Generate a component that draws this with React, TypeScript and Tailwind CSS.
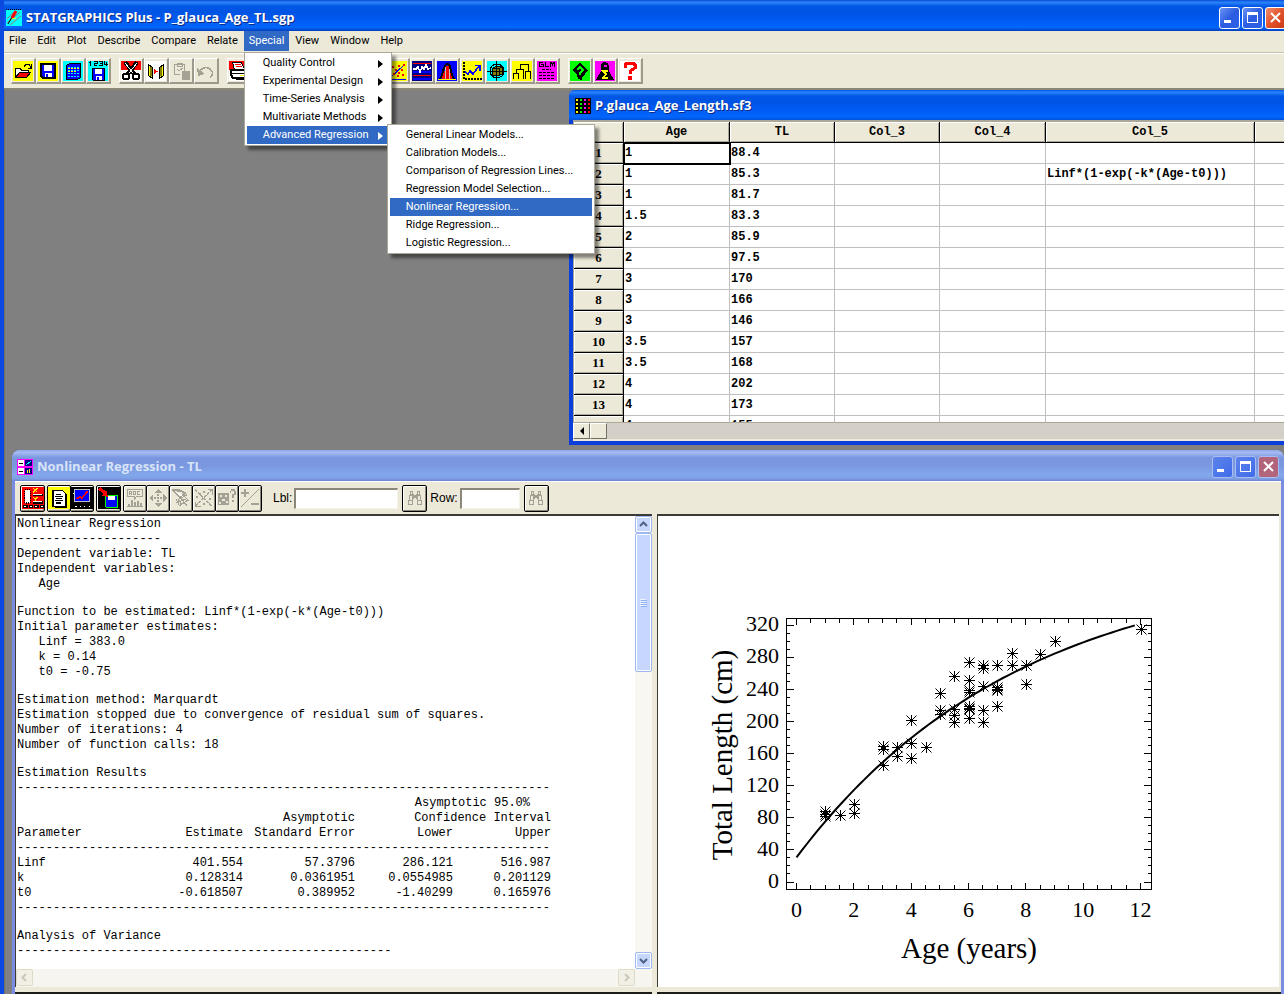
import { ReactNode } from 'react';
import clsx from 'clsx';

const MENUS = ['File', 'Edit', 'Plot', 'Describe', 'Compare', 'Relate', 'Special', 'View', 'Window', 'Help'];

const SPECIAL_ITEMS = [
  'Quality Control',
  'Experimental Design',
  'Time-Series Analysis',
  'Multivariate Methods',
  'Advanced Regression',
];

const REGRESSION_ITEMS = [
  'General Linear Models...',
  'Calibration Models...',
  'Comparison of Regression Lines...',
  'Regression Model Selection...',
  'Nonlinear Regression...',
  'Ridge Regression...',
  'Logistic Regression...',
];

const SHEET_ROWS: Array<[string, string]> = [
  ['1', '88.4'],
  ['1', '85.3'],
  ['1', '81.7'],
  ['1.5', '83.3'],
  ['2', '85.9'],
  ['2', '97.5'],
  ['3', '170'],
  ['3', '166'],
  ['3', '146'],
  ['3.5', '157'],
  ['3.5', '168'],
  ['4', '202'],
  ['4', '173'],
  ['4', '155'],
];

const ESTIMATES = [
  ['Linf', '401.554', '57.3796', '286.121', '516.987'],
  ['k', '0.128314', '0.0361951', '0.0554985', '0.201129'],
  ['t0', '-0.618507', '0.389952', '-1.40299', '0.165976'],
];

// age -> observed lengths
const POINTS: Array<[number, number[]]> = [
  [1, [88.4, 85.3, 81.7]],
  [1.5, [83.3]],
  [2, [85.9, 97.5]],
  [3, [170, 166, 146]],
  [3.5, [157, 168]],
  [4, [202, 173, 155]],
  [4.5, [168]],
  [5, [236, 215, 210]],
  [5.5, [257, 216, 208, 200]],
  [6, [274, 252, 240, 237, 220, 217, 216, 204]],
  [6.5, [270, 267, 244, 215, 200]],
  [7, [270, 243, 241, 240, 219]],
  [7.5, [285, 270]],
  [8, [270, 247]],
  [8.5, [284]],
  [9, [301]],
  [12, [315]],
];

function Icon({ children, size = 20 }: { children: ReactNode; size?: number }) {
  return (
    <svg width={size} height={size} viewBox="0 0 20 20" shapeRendering="crispEdges" fill="none" aria-hidden="true" className="shrink-0">
      {children}
    </svg>
  );
}

const ICONS: Record<string, ReactNode> = {
  open: (
    <Icon>
      <path fill="#ff0" d="M0 0h20v20H0z" />
      <path fill="#fff" stroke="#000" d="M2.500 16.500v-9h5l1 2h7v3" />
      <path fill="#f00" stroke="#000" d="M2.500 16.500l4-5h11l-4 5z" />
      <path stroke="#000" d="M11 5.500l2-2h3l2 3M18.500 3v4h-4" />
    </Icon>
  ),
  save: (
    <Icon>
      <path fill="#ff0" d="M0 0h20v20H0z" />
      <path fill="#00f" stroke="#000" strokeWidth="2" d="M3 3h14v14H5l-2-2z" />
      <path fill="#fff" d="M6 4h8v6H6z" />
      <path fill="#fff" d="M7 12h7v4H7z" />
      <path fill="#00f" d="M8 13h2v3H8z" />
    </Icon>
  ),
  sheet: (
    <Icon>
      <path fill="#0ff" d="M0 0h20v20H0z" />
      <path fill="#00f" stroke="#000" d="M3.500 4.500l3-2h11v14l-3 2h-11z" />
      <path stroke="#0ff" strokeDasharray="2 1" d="M5 6.500h11M5 9.500h11M5 12.500h11M5 15.500h11" />
      <path stroke="#ff0" strokeDasharray="2 1" d="M5 7.500h11M5 10.500h8" />
    </Icon>
  ),
  saveData: (
    <Icon>
      <path fill="#0ff" d="M0 0h20v20H0z" />
      <path stroke="#000" d="M2.500 0v5M1 1.500h1M6 .5h3v2H6.500v2H9M11 .5h3v4h-3M12 2.500h2M16.500 0v3h3M18.500 1v4" />
      <path fill="#00f" stroke="#000" d="M4.500 7.500h12v12h-11l-1-1z" />
      <path fill="#fff" d="M7 8h7v5H7zM8 15h6v4H8z" />
      <path fill="#00f" d="M9 16h2v3H9z" />
    </Icon>
  ),
  cut: (
    <Icon>
      <path fill="#f00" d="M0 0h20v9H0z" />
      <path fill="#fff" d="M0 9h20v11H0z" />
      <path stroke="#000" strokeWidth="4" d="M4 1l10 13M16 1L6 14" />
      <path stroke="#fff" d="M4 2l8 10M16 2L8 12" />
      <circle cx="5" cy="15.500" r="3" stroke="#000" strokeWidth="2" fill="#fff" />
      <circle cx="15" cy="15.500" r="3" stroke="#000" strokeWidth="2" fill="#fff" />
    </Icon>
  ),
  copy: (
    <Icon>
      <path fill="#fff" d="M0 0h20v20H0z" />
      <path fill="#ff0" stroke="#000" d="M2.500 3.500l4 3v11l-4-3zM17.500 3.500l-4 3v11l4-3z" />
      <path fill="#808000" d="M4 6h2v9H4zM14 6h2v9h-2z" />
      <path fill="#f00" d="M8 8l4 2.500L8 13z" />
    </Icon>
  ),
  paste: (
    <Icon>
      <path stroke="#a5a295" d="M3.500 3.500h10v7M3.500 3v10h5M6 2.500h5v3H6zM6 8l2 2 4-3" />
      <path fill="#a5a295" d="M11 10h8v9h-8z" />
    </Icon>
  ),
  undo: (
    <Icon>
      <path stroke="#a5a295" strokeWidth="1.500" d="M3 12c2-5 7-7 11-4s3 6 0 8" />
      <path fill="#a5a295" d="M1 7l1 8 7-2z" />
    </Icon>
  ),
  print: (
    <Icon>
      <path fill="#f00" d="M0 0h20v9H0z" />
      <path fill="#fff" d="M0 9h20v11H0z" />
      <path fill="#fff" stroke="#000" d="M5.500 8.500l-2-7h9l3 7z" />
      <path stroke="#f00" d="M6 3.500h6M7 5.500h6" />
      <path fill="#fff" stroke="#000" strokeWidth="2" d="M2 9h15l2 3v5H4l-2-3z" />
      <path stroke="#000" d="M3 12.500h14M7 18.500h9" />
      <path fill="#ff0" d="M11 14h4v1h-4z" />
    </Icon>
  ),
  scatter: (
    <Icon>
      <path fill="#ff0" d="M0 0h20v20H0z" />
      <path stroke="#00f" d="M2.500 1v17h16M3 17L18 3" />
      <path fill="#f00" d="M5 5h2v2H5zM8 8h2v2H8zM11 4h2v2h-2zM14 8h2v2h-2zM6 12h2v2H6zM11 11h2v2h-2zM15 13h2v2h-2zM16 3h2v2h-2zM10 14h2v2h-2z" />
    </Icon>
  ),
  control: (
    <Icon>
      <path fill="#000080" d="M0 0h20v20H0z" />
      <path stroke="#f00" d="M1 2.500h18M1 14.500h18" />
      <path stroke="#00f" strokeWidth="2" d="M1 11h18M1 18h18" />
      <path stroke="#fff" strokeWidth="1.500" d="M1 8h3l2-2 2 5 2-5 2 2 2-4 2 4 3-1" />
    </Icon>
  ),
  histogram: (
    <Icon>
      <path fill="#00f" d="M0 0h20v20H0z" />
      <path fill="#f00" d="M8 5h4v13H8zM5 10h3v8H5zM12 10h3v8h-3z" />
      <path stroke="#c0c0c0" d="M8.500 6v12M12.500 6v12" />
      <path stroke="#000" strokeWidth="2" d="M2 18c5-1 3-14 8-15s3 14 8 15" />
      <path stroke="#ff0" d="M1 18.500h18" />
    </Icon>
  ),
  trend: (
    <Icon>
      <path fill="#ff0" d="M0 0h20v20H0z" />
      <path stroke="#000" strokeDasharray="2 1" strokeWidth="2" d="M2 1v17h18" />
      <path stroke="#00f" strokeWidth="1.500" d="M3 11l3 2 2-3 3 3 6-8M13 4.500h5v5" />
    </Icon>
  ),
  cube: (
    <Icon>
      <path fill="#0ff" d="M0 0h20v20H0z" />
      <circle cx="10" cy="10" r="7" stroke="#000" />
      <path fill="#808000" stroke="#000" d="M5.500 7.500l3-2h7v7l-3 2h-7z" />
      <path stroke="#000" d="M5.500 7.500h7v7M12.500 7.500l3-2M9.500 0v20M0 10.500h20" />
    </Icon>
  ),
  tree: (
    <Icon>
      <path fill="#ff0" d="M0 0h20v20H0z" />
      <path stroke="#000" d="M1.500 18v-6h5v6M4.500 12V8.500h7V18M8.500 8v-5h8v7M13.500 18v-8h5v8" />
    </Icon>
  ),
  glm: (
    <Icon>
      <path fill="#f0f" d="M0 0h20v20H0z" />
      <path stroke="#000" d="M6 1.500H2.500v4H6v-2H4M8.500 1v4.500H12M13.500 6V1.500h1l1 2 1-2h1V6" />
      <path stroke="#000" strokeDasharray="3 1" d="M5 8.500h9M2 11.500h15M2 14.500h15M2 17.500h15" />
    </Icon>
  ),
  advisor: (
    <Icon>
      <path fill="#0f0" d="M0 0h20v20H0z" />
      <path fill="#000" d="M2 9l8-7 8 7-6 8v2l-4-1-1-4z" />
      <path stroke="#0f0" strokeWidth="1.500" d="M7 9l3-3 3 3-3 3v2" />
    </Icon>
  ),
  wizard: (
    <Icon>
      <path fill="#f0f" d="M0 0h20v20H0z" />
      <path fill="#000" d="M1 19l5-9V3l3-2 4 1 1 4v4l5 9z" />
      <path fill="#f0f" d="M9 4h3v2H9z" />
      <path stroke="#ff0" strokeWidth="1.500" d="M13 10H8l3 3-3 4h5" />
    </Icon>
  ),
  question: (
    <Icon>
      <path fill="#fff" d="M0 0h20v20H0z" />
      <path stroke="#f00" strokeWidth="3" d="M5 7V4l2-2h6l2 2v3l-5 3v3" />
      <path fill="#f00" d="M8 15h4v4H8z" />
    </Icon>
  ),
  blank: (
    <Icon>
      <path fill="#ff0" d="M0 0h20v20H0z" />
    </Icon>
  ),
  input: (
    <Icon size={22}>
      <path fill="#f00" d="M0 0h20v20H0z" />
      <path fill="#fff" stroke="#000" strokeDasharray="1 1" d="M2.500 2.500h5v12h-5z" />
      <path stroke="#ff0" d="M10 1l4 4M14 1l-4 4M10 9l2 2 2-2M12 11v2" />
      <path stroke="#000" strokeWidth="2" d="M10 7h9M10 14h9" />
      <path stroke="#fff" d="M10 6.500h8M10 13.500h8" />
      <path fill="#fff" stroke="#000" d="M1.500 16.500h3v2h-3zM6.500 16.500h3v2h-3zM11.500 16.500h3v2h-3zM16.500 16.500h3v2h-3z" />
    </Icon>
  ),
  report: (
    <Icon size={22}>
      <path fill="#ff0" d="M0 0h20v20H0z" />
      <path fill="#fff" stroke="#000" d="M4.500 3.500h9l2 2v12h-11z" />
      <path stroke="#000" d="M7 6.500h5M6 8.500h8M7 10.500h6M6 12.500h8M7 14.500h5M16.500 6v12.500H6" />
    </Icon>
  ),
  graph: (
    <Icon size={22}>
      <path fill="#000" d="M0 0h20v20H0z" />
      <path fill="#00f" stroke="#c0c0c0" d="M3.500 2.500h13v11h-13z" />
      <path stroke="#f00" strokeWidth="1.500" d="M5 11l3-2 2 1 5-6" />
      <path stroke="#fff" strokeDasharray="1 3" d="M2 5.500h1M4 17.500h13" />
    </Icon>
  ),
  saveResults: (
    <Icon size={22}>
      <path fill="#000" d="M0 0h20v20H0z" />
      <path fill="#00f" stroke="#0f0" d="M6.500 7.500h11v11h-10l-1-1z" />
      <path fill="#fff" d="M9 8h6v4H9z" />
      <path stroke="#f00" strokeWidth="3" d="M1 1l6 5" />
      <path fill="#f00" d="M3 8l5-5 1 6z" />
    </Icon>
  ),
  label: (
    <Icon>
      <path stroke="#a5a295" d="M2.500 1.500h15v7h-6l-2 3v-3h-7z" />
      <path stroke="#a5a295" d="M4.500 7V3.500h2V7M4.500 5.500h2M8.500 3.500h2v3h-2zM15 3.500h-2.500v3H15M2 18.500h16" />
      <path stroke="#a5a295" strokeWidth="2" d="M4 16v2M7 12v6M10 14v4M13 13v5M16 15v3" />
    </Icon>
  ),
  move: (
    <Icon>
      <path fill="#a5a295" d="M10 1l4 4H6zM10 19l4-4H6zM1 10l4-4v8zM19 10l-4-4v8z" />
      <path fill="#a5a295" d="M9 6h2v2H9zM9 12h2v2H9zM6 9h2v2H6zM12 9h2v2h-2zM9 9h2v2H9z" />
    </Icon>
  ),
  brush: (
    <Icon>
      <path stroke="#a5a295" strokeWidth="1.500" d="M2 2l7 8 5-5-6-3zM2 2l10 2M9 10l7-3" />
      <path stroke="#a5a295" d="M7 11l4 6M10 10l6 8M13 8l5 5M5 15l10-4M8 18l9-6M5 11l3 6" />
      <path stroke="#fff" d="M6 4l6 5" />
    </Icon>
  ),
  exclude: (
    <Icon>
      <path stroke="#a5a295" strokeDasharray="3 1" d="M1 1.500l17 17M18 1.500l-17 17" />
      <path stroke="#a5a295" d="M14 1.500h4.500v5M1.500 14v4.500h5" />
      <path fill="#a5a295" d="M2 8h2v2H2zM9 3h2v2H9zM15 10h2v2h-2zM9 15h2v2H9zM5 5h2v2H5z" />
    </Icon>
  ),
  identify: (
    <Icon>
      <path fill="#a5a295" d="M1 5h11v12H1zM13 3h1V1h4v2h1v4h-2v3h-2V6h2V3h-3v2h-1zM15 12h2v2h-2z" />
      <path fill="#ece9d8" d="M3 7h2v2H3zM8 7h2v2H8zM5 11h3v2H5zM2 14h2v2H2zM9 13h2v2H9z" />
    </Icon>
  ),
  plusMinus: (
    <Icon>
      <path stroke="#a5a295" d="M1 19L19 1" />
      <path stroke="#a5a295" strokeWidth="2" d="M1 5h8M5 1v8M11 16h8" />
    </Icon>
  ),
  binoculars: (
    <Icon>
      <path stroke="#a5a295" d="M5.500 3.500h2v3h-2zM12.500 3.500h2v3h-2zM4.500 7.500h3v5h-3zM12.500 7.500h3v5h-3zM3.500 12.500h4v4h-4zM12.500 12.500h4v4h-4z" />
      <path fill="#a5a295" d="M8 6h1v5H8zM11 6h1v5h-1zM9 7h2v3H9z" />
    </Icon>
  ),
};

const TOOL_GROUPS = [
  ['open', 'save', 'sheet', 'saveData'],
  ['cut', 'copy', 'paste', 'undo'],
  ['print', 'blank', 'blank'],
  ['blank', 'blank', 'blank', 'scatter', 'control', 'histogram', 'trend', 'cube', 'tree', 'glm'],
  ['advisor', 'wizard', 'question'],
];

const PANE_TOOL_GROUPS = [
  ['input'],
  ['report', 'graph'],
  ['saveResults'],
  ['label', 'move', 'brush', 'exclude', 'identify', 'plusMinus'],
];

function ToolButton({ name }: { name: string }) {
  return (
    <button
      type="button"
      aria-label={name}
      className="flex h-[26px] w-[25px] items-center justify-center border border-r-2 border-b-2 border-t-white border-l-white border-r-[#9d9a8c] border-b-[#9d9a8c] bg-[#ece9d8]"
    >
      {ICONS[name]}
    </button>
  );
}

function PaneButton({ name, wide }: { name: string; wide?: boolean }) {
  return (
    <button
      type="button"
      aria-label={name}
      className={clsx(
        '-mr-px flex h-[27px] items-center justify-center rounded-[2px] border border-black bg-[#ece9d8] shadow-[inset_1px_1px_0_#fff,inset_-1px_-1px_0_#8a877a]',
        wide ? 'w-[25px]' : 'w-6'
      )}
    >
      {ICONS[name]}
    </button>
  );
}

function CaptionButtons({ inactive }: { inactive?: boolean }) {
  const base = clsx(
    'flex h-[22px] w-[21px] items-center justify-center rounded-[3px] border',
    inactive ? 'border-[#a9bdf3]' : 'border-white'
  );
  const blue = inactive
    ? 'bg-linear-to-br from-[#5d83ea] to-[#3f6bea]'
    : 'bg-linear-to-br from-[#6a94f5] via-[#2c5ce0] to-[#2a63ea]';
  return (
    <div className="flex gap-0.5">
      <button type="button" aria-label="Minimize" className={clsx(base, blue)}>
        <svg width="15" height="15" shapeRendering="crispEdges">
          <path fill="#fff" d="M2 10h7v3H2z" />
        </svg>
      </button>
      <button type="button" aria-label="Maximize" className={clsx(base, blue)}>
        <svg width="15" height="15" shapeRendering="crispEdges">
          <path fill="#fff" fillRule="evenodd" d="M2 2h11v11H2zM3 5v7h9V5z" />
        </svg>
      </button>
      <button
        type="button"
        aria-label="Close"
        className={clsx(base, inactive ? 'bg-[#b2647a]' : 'bg-linear-to-br from-[#f0906e] via-[#e2512a] to-[#c93a10]')}
      >
        <svg width="15" height="15">
          <path stroke="#fff" strokeWidth="2" d="M3 3l9 9M12 3l-9 9" />
        </svg>
      </button>
    </div>
  );
}

function MenuList({ items, active, arrows, children }: { items: string[]; active: string; arrows?: boolean; children?: ReactNode }) {
  return (
    <ul className="border border-[#aca899] bg-white px-0.5 py-px whitespace-nowrap text-black shadow-[4px_4px_3px_rgba(0,0,0,0.45)]">
      {items.map((item) => (
        <li key={item} className="relative">
          <button
            type="button"
            className={clsx(
              'flex h-[18px] w-full items-center justify-between pt-px pr-1.5 pl-4 text-left',
              item === active && 'bg-[#316ac5] text-white'
            )}
          >
            {item}
            {arrows && (
              <svg width="5" height="8">
                <path fill="currentColor" d="M0 0l5 4-5 4z" />
              </svg>
            )}
          </button>
          {item === active && children}
        </li>
      ))}
    </ul>
  );
}

function MenuBar() {
  return (
    <nav className="flex h-[22px] items-stretch gap-px border-b border-[#c5c2b2] bg-[#ece9d8] font-[Roboto,sans-serif] text-[11px]">
      {MENUS.map((m) => (
        <div key={m} className="relative flex">
          <button type="button" className={clsx('mb-px px-[5px] pt-px', m === 'Special' && 'bg-[#316ac5] text-white')}>
            {m}
          </button>
          {m === 'Special' && (
            <div className="absolute top-full left-0 z-30 w-[148px]">
              <MenuList items={SPECIAL_ITEMS} active="Advanced Regression" arrows>
                <div className="absolute -top-0.5 left-[140px] z-40 w-[208px]">
                  <MenuList items={REGRESSION_ITEMS} active="Nonlinear Regression..." />
                </div>
              </MenuList>
            </div>
          )}
        </div>
      ))}
    </nav>
  );
}

function Sheet() {
  const head = 'border-r border-b border-black bg-[#ece9d8] font-bold shadow-[inset_1px_1px_0_#fff,inset_-1px_-1px_0_#aca899]';
  const cell = 'border-r border-b border-[#c0c0c0] px-px';
  return (
    <section className="absolute top-0 left-[564px] flex h-[355px] w-[860px] flex-col rounded-t-md border-4 border-t-0 border-[#0a3fdc] bg-[#ece9d8]">
      <header className="-mx-1 flex h-[30px] shrink-0 items-center gap-1 rounded-t-md bg-[linear-gradient(#0058ee,#2b83fa_8%,#0057e5_20%,#0054e3_40%,#005bf5_66%,#0266fc_90%,#0050d8)] px-1.5 pt-0.5 text-white">
        <svg width="16" height="16" shapeRendering="crispEdges" aria-hidden="true">
          <path d="M0 0h16v16H0z" />
          <path stroke="#ff0" strokeWidth="2" strokeDasharray="2 2" d="M2 1v15" />
          <path stroke="#0f0" strokeWidth="2" strokeDasharray="2 2" d="M6 1v15" />
          <path stroke="#f0f" strokeWidth="2" strokeDasharray="2 2" d="M10 1v15" />
          <path stroke="#f00" strokeWidth="2" strokeDasharray="2 2" d="M14 1v15" />
        </svg>
        <h2 className="font-['Open_Sans',sans-serif] text-[13px] font-bold [text-shadow:1px_1px_0_#0a2a80]">P.glauca_Age_Length.sf3</h2>
      </header>
      <div className="min-h-0 flex-1 overflow-hidden border-t-2 border-l border-[#aca899] bg-white">
        <table className="w-full table-fixed border-separate border-spacing-0 font-['Liberation_Mono',monospace] text-[12px] leading-5 font-bold">
          <colgroup>
            <col className="w-[50px]" />
            <col className="w-[106px]" />
            <col className="w-[105px]" />
            <col className="w-[105px]" />
            <col className="w-[106px]" />
            <col className="w-[209px]" />
            <col />
          </colgroup>
          <thead>
            <tr className="h-[21px]">
              <th className={head} />
              {['Age', 'TL', 'Col_3', 'Col_4', 'Col_5'].map((c) => (
                <th key={c} scope="col" className={head}>{c}</th>
              ))}
              <th className={head} />
            </tr>
          </thead>
          <tbody>
            {SHEET_ROWS.map(([age, tl], i) => (
              <tr key={i} className="h-[21px]">
                <th scope="row" className={clsx(head, "font-['Liberation_Serif',serif] text-[13px]")}>{i + 1}</th>
                <td className={clsx(cell, i === 0 && 'outline-2 -outline-offset-1 outline-black')}>{age}</td>
                <td className={cell}>{tl}</td>
                <td className={cell} />
                <td className={cell} />
                <td className={clsx(cell, 'whitespace-nowrap')}>{i === 1 && 'Linf*(1-exp(-k*(Age-t0)))'}</td>
                <td className={cell} />
              </tr>
            ))}
          </tbody>
        </table>
      </div>
      <div className="mb-0.5 flex h-[17px] shrink-0 border-t border-[#aca899] bg-[#d4d0c8]">
        <button type="button" aria-label="Scroll left" className="flex w-[17px] items-center justify-center border border-t-white border-l-white border-r-[#716f64] border-b-[#716f64] bg-[#ece9d8]">
          <svg width="4" height="8">
            <path d="M4 0v8L0 4z" />
          </svg>
        </button>
        <div className="w-[17px] border border-t-white border-l-white border-r-[#716f64] border-b-[#716f64] bg-[#ece9d8]" />
      </div>
    </section>
  );
}

function Rule({ count }: { count: number }) {
  return <div>{'-'.repeat(count)}</div>;
}

function Report() {
  return (
    <div className="flex min-w-0 flex-1 flex-col gap-[13px] overflow-hidden pt-px pl-px font-['Liberation_Mono',monospace] text-[12px] leading-[15px] whitespace-pre">
      <div>
        <p>Nonlinear Regression</p>
        <Rule count={20} />
        <p>Dependent variable: TL</p>
        <p>Independent variables:</p>
        <p>{'   Age'}</p>
      </div>
      <div>
        <p>Function to be estimated: Linf*(1-exp(-k*(Age-t0)))</p>
        <p>Initial parameter estimates:</p>
        <p>{'   Linf = 383.0'}</p>
        <p>{'   k = 0.14'}</p>
        <p>{'   t0 = -0.75'}</p>
      </div>
      <div>
        <p>Estimation method: Marquardt</p>
        <p>Estimation stopped due to convergence of residual sum of squares.</p>
        <p>Number of iterations: 4</p>
        <p>Number of function calls: 18</p>
      </div>
      <div className="w-[534px]">
        <p>Estimation Results</p>
        <Rule count={74} />
        <table className="w-full table-fixed text-right">
          <colgroup>
            <col className="w-[110px]" />
            <col />
            <col className="w-[112px]" />
            <col className="w-[98px]" />
            <col className="w-[98px]" />
          </colgroup>
          <thead>
            <tr>
              <td colSpan={3} />
              <th colSpan={2} className="pr-[21px] font-normal">Asymptotic 95.0%</th>
            </tr>
            <tr>
              <td colSpan={2} />
              <th className="font-normal">Asymptotic</th>
              <th colSpan={2} className="font-normal">Confidence Interval</th>
            </tr>
            <tr>
              <th className="text-left font-normal">Parameter</th>
              <th className="font-normal">Estimate</th>
              <th className="font-normal">Standard Error</th>
              <th className="font-normal">Lower</th>
              <th className="font-normal">Upper</th>
            </tr>
          </thead>
          <tbody>
            <tr>
              <td colSpan={5} className="text-left"><Rule count={74} /></td>
            </tr>
            {ESTIMATES.map(([name, ...vals]) => (
              <tr key={name}>
                <th scope="row" className="text-left font-normal">{name}</th>
                {vals.map((v) => (
                  <td key={v}>{v}</td>
                ))}
              </tr>
            ))}
          </tbody>
        </table>
        <Rule count={74} />
      </div>
      <div>
        <p>Analysis of Variance</p>
        <Rule count={52} />
      </div>
    </div>
  );
}

const px = (age: number) => 138.5 + age * 28.67;
const py = (len: number) => 366 - len * 0.802;
const fitted = (age: number) => 401.554 * (1 - Math.exp(-0.128314 * (age + 0.618507)));

function Chart() {
  const curve = Array.from({ length: 60 }, (_, i) => i * 0.2)
    .map((a) => `${px(a).toFixed(1)},${py(fitted(a)).toFixed(1)}`)
    .join(' ');
  return (
    <svg viewBox="0 0 621 471" className="h-full w-full" fontFamily="'Liberation Serif', serif">
      <g stroke="#000" fill="none" shapeRendering="crispEdges">
        <path d="M128.500 102.500h365v271h-365z" />
        {Array.from({ length: 25 }, (_, i) => {
          const x = Math.floor(px(i / 2)) + 0.5;
          const len = i % 4 === 0 ? 6 : 4;
          return <path key={i} d={`M${x} 373v-${len}M${x} 103v${len}`} />;
        })}
        {Array.from({ length: 33 }, (_, i) => {
          const y = Math.floor(py(i * 10)) + 0.5;
          const len = i % 4 === 0 ? 7 : 3;
          return <path key={i} d={`M129 ${y}h${len}M493 ${y}h-${len}`} />;
        })}
      </g>
      <polyline points={curve} fill="none" stroke="#000" strokeWidth="2" />
      <g stroke="#000" strokeWidth="1">
        {POINTS.flatMap(([age, lens]) =>
          lens.map((len) => {
            const x = Math.round(px(age)) + 0.5;
            const y = Math.round(py(len)) + 0.5;
            return (
              <path
                key={`${age}-${len}`}
                d={`M${x - 5.5} ${y}h11M${x} ${y - 5.5}v11M${x - 5} ${y - 5}l10 10M${x + 5} ${y - 5}l-10 10`}
              />
            );
          })
        )}
      </g>
      <g fontSize="22" textAnchor="middle">
        {[0, 2, 4, 6, 8, 10, 12].map((v) => (
          <text key={v} x={px(v)} y="401">{v}</text>
        ))}
      </g>
      <g fontSize="22" textAnchor="end">
        {[0, 40, 80, 120, 160, 200, 240, 280, 320].map((v) => (
          <text key={v} x="121" y={py(v) + 6}>{v}</text>
        ))}
      </g>
      <text x="311" y="442" fontSize="29" textAnchor="middle">Age (years)</text>
      <text transform="translate(74 239) rotate(-90)" fontSize="29" textAnchor="middle">Total Length (cm)</text>
    </svg>
  );
}

function Chevron({ d, dim }: { d: string; dim?: boolean }) {
  return (
    <svg width="9" height="9" viewBox="0 0 9 9" fill="none" aria-hidden="true">
      <path d={d} stroke={dim ? '#c9c7ba' : '#4d6185'} strokeWidth="2" />
    </svg>
  );
}

function RegressionWindow() {
  const scroll = 'flex items-center justify-center rounded-[2px] border border-[#9db8f3] bg-[#c6d6fd] shadow-[inset_0_0_0_1px_#fff]';
  const dimScroll = 'flex h-[17px] w-[17px] items-center justify-center rounded-[2px] border border-[#dddac8] bg-[#f2f0e6]';
  const field = 'h-[21px] border-t-2 border-l-2 border-r border-b border-t-[#8a877a] border-l-[#8a877a] border-r-[#f5f3ea] border-b-[#f5f3ea] bg-white px-1 outline-none';
  return (
    <section className="absolute inset-x-0 top-[360px] bottom-0 left-[7px] flex flex-col rounded-t-lg border-x-[3px] border-[#7b8de2] bg-[#ece9d8]">
      <header className="-mx-[3px] flex h-[31px] shrink-0 items-center gap-1 rounded-t-lg bg-[linear-gradient(#8ea6ea,#a4bcf2_8%,#7a96df_25%,#7b97e0_50%,#82a8ea_80%,#7e9fe6_92%,#6f84cf)] pt-0.5 pr-[5px] pl-[5px]">
        <svg width="16" height="16" shapeRendering="crispEdges" aria-hidden="true">
          <path fill="#f0f" d="M0 0h16v16H0z" />
          <path fill="#fff" d="M1 1h6v6H1zM1 9h6v6H1z" />
          <path fill="#000080" d="M8 1h7v6H8zM8 9h7v6H8z" />
          <path stroke="#000" d="M2 4.500h4M2 12.500h4" />
          <path stroke="#0ff" d="M9 6l5-4" />
          <path stroke="#ff0" d="M10.500 14v-3M12.500 14v-4" />
        </svg>
        <h2 className="flex-1 font-['Open_Sans',sans-serif] text-[13px] font-bold text-[#d8e4f8]">Nonlinear Regression - TL</h2>
        <CaptionButtons inactive />
      </header>
      <form className="flex h-[33px] shrink-0 items-center border-t border-white pl-[5px] font-['Liberation_Sans',sans-serif] text-[12px]">
        {PANE_TOOL_GROUPS.map((group, i) => (
          <div key={i} className={clsx('flex', i < 3 ? 'mr-[3px]' : 'mr-3')}>
            {group.map((name) => (
              <PaneButton key={name} name={name} wide={group.length === 1} />
            ))}
          </div>
        ))}
        <label htmlFor="lbl" className="mr-0.5">Lbl:</label>
        <input id="lbl" className={clsx(field, 'w-[104px]')} />
        <div className="mr-1 ml-1 flex"><PaneButton name="binoculars" wide /></div>
        <label htmlFor="row" className="mr-0.5">Row:</label>
        <input id="row" className={clsx(field, 'w-[60px]')} />
        <div className="ml-1 flex"><PaneButton name="binoculars" wide /></div>
      </form>
      <div className="flex min-h-0 flex-1 gap-[5px] pr-0.5">
        <div className="flex w-[637px] shrink-0 flex-col border-t-2 border-l border-[#3c3b36] bg-white">
          <div className="flex min-h-0 flex-1">
            <Report />
            <div className="flex w-[17px] flex-col bg-[#f8f7f2]">
              <button type="button" aria-label="Scroll up" className={clsx(scroll, 'h-[17px]')}>
                <Chevron d="M1 6l3.500-3.500L8 6" />
              </button>
              <div className={clsx(scroll, 'h-[139px]')}>
                <svg width="7" height="8" shapeRendering="crispEdges">
                  <path stroke="#eef4fe" d="M0 .5h6M0 2.500h6M0 4.500h6M0 6.500h6" />
                  <path stroke="#8cb0f8" d="M1 1.500h6M1 3.500h6M1 5.500h6M1 7.500h6" />
                </svg>
              </div>
              <button type="button" aria-label="Scroll down" className={clsx(scroll, 'mt-auto h-[17px]')}>
                <Chevron d="M1 3l3.500 3.500L8 3" />
              </button>
            </div>
          </div>
          <div className="flex h-[18px] shrink-0 justify-between bg-[#f6f5ef] pr-[17px]">
            <button type="button" aria-label="Scroll left" className={dimScroll}>
              <Chevron dim d="M6 1L2.500 4.500 6 8" />
            </button>
            <button type="button" aria-label="Scroll right" className={dimScroll}>
              <Chevron dim d="M3 1l3.500 3.500L3 8" />
            </button>
          </div>
        </div>
        <div className="min-w-0 flex-1 border-t-2 border-l border-[#3c3b36] bg-white">
          <Chart />
        </div>
      </div>
      <div className="flex h-[7px] shrink-0 gap-[5px] pt-[5px]">
        <div className="w-[637px] border-t-2 border-[#1c1b18]" />
        <div className="flex-1 border-t-2 border-[#1c1b18]" />
      </div>
    </section>
  );
}

export default function App() {
  return (
    <main className="flex h-screen flex-col overflow-hidden border-l-4 border-[#0b49e0] bg-[#ece9d8] font-['Open_Sans',sans-serif] text-black">
      <header className="-ml-1 flex h-[31px] shrink-0 items-center gap-1 bg-[linear-gradient(#0a4fd8,#2b83fa_8%,#0057e5_20%,#0054e3_40%,#005bf5_66%,#0266fc_88%,#0040c0)] pt-1 pl-1.5 text-white">
        <svg width="16" height="17" aria-hidden="true">
          <path fill="#0ff" d="M0 1h16v16H0z" />
          <path stroke="#000" strokeDasharray="1 1" d="M0 .5h16" />
          <path stroke="#808080" d="M1 14L14 3M1 10l7-7M4 16l11-9" />
          <path stroke="#000" d="M2 15l4-7" />
          <path stroke="#f00" strokeWidth="3" d="M6 9l4-7" />
          <path stroke="#ff0" d="M6 10l4-1" />
        </svg>
        <h1 className="flex-1 text-[13px] font-bold [text-shadow:1px_1px_0_#0a2a80]">STATGRAPHICS Plus - P_glauca_Age_TL.sgp</h1>
        <div className="-mr-0.5">
          <CaptionButtons />
        </div>
      </header>
      <MenuBar />
      <div className="flex h-[37px] shrink-0 items-center gap-2 border-t border-b-2 border-t-white border-b-[#8a8776] pl-[7px]">
        {TOOL_GROUPS.map((group, i) => (
          <div key={i} className="flex">
            {group.map((name, j) => (
              <ToolButton key={j} name={name} />
            ))}
          </div>
        ))}
      </div>
      <div className="relative min-h-0 flex-1 overflow-hidden border-l border-[#716f64] bg-[#808080]">
        <Sheet />
        <RegressionWindow />
      </div>
    </main>
  );
}
